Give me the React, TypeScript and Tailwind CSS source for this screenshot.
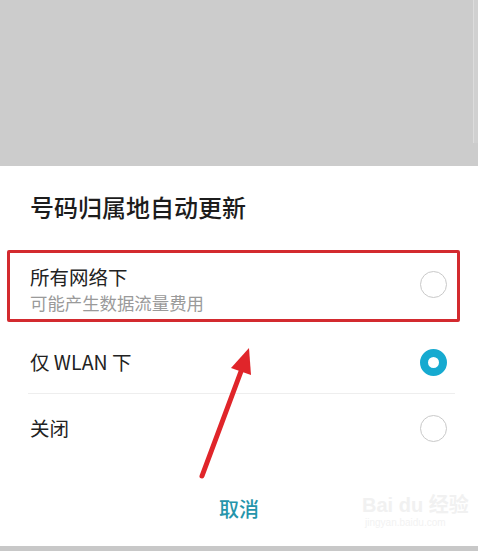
import React from 'react';

const font = { fontFamily: '"Noto Sans CJK SC", "Noto Sans", sans-serif' };

function Radio({ checked }: { checked?: boolean }) {
  return checked ? (
    <div className="w-[27px] h-[27px] rounded-full border-[8px] border-[#16aad0] bg-white" />
  ) : (
    <div className="w-[27px] h-[27px] rounded-full border-[1.5px] border-[#c9c9c9] bg-white" />
  );
}

export default function App() {
  return (
    <div
      className="relative w-[478px] h-[551px] overflow-hidden bg-white flex flex-col"
      style={font}
    >
      {/* dimmed page behind the sheet */}
      <div className="h-[166px] bg-[#cccccc] flex justify-end">
        <div className="w-[5px] h-[143px] border-l border-[#dcdcdc] bg-[#d0d0d0]" />
      </div>

      {/* title */}
      <div className="h-[84px] pt-[25px] pl-[30px]">
        <h2 className="text-[24px] leading-[32px] text-[#1c1c1c] font-medium">号码归属地自动更新</h2>
      </div>

      {/* option: all networks (highlighted) */}
      <div className="ml-[7px] mr-[18px] h-[72px] border-[3px] border-[#d32a2f] rounded-[2px] flex items-start justify-between pl-[20px] pr-[10px]">
        <div className="pt-[11px] flex flex-col">
          <span className="text-[19.5px] leading-[26px] text-[#222]">所有网络下</span>
          <span className="text-[17.4px] leading-[26px] text-[#9a9a9a]">可能产生数据流量费用</span>
        </div>
        <div className="self-center -mt-[3px]">
          <Radio />
        </div>
      </div>

      {/* option: WLAN only */}
      <div className="ml-[28px] mr-[23px] h-[72px] pt-[9px] flex items-center justify-between pl-[2px] pr-[8px] border-b border-[#eeeeee]">
        <span className="text-[19.5px] leading-[26px] text-[#222]">仅 WLAN 下</span>
        <Radio checked />
      </div>

      {/* option: off */}
      <div className="ml-[28px] mr-[23px] h-[68px] flex items-center justify-between pl-[2px] pr-[8px]">
        <span className="text-[19.5px] leading-[26px] text-[#222]">关闭</span>
        <Radio />
      </div>

      {/* cancel */}
      <div className="h-[84px] pt-[10px] flex items-center justify-center">
        <span className="text-[20px] leading-[28px] font-medium text-[#2595ab]">取消</span>
      </div>

      <div className="h-[5px] bg-[#c8c8c8]" />

      {/* annotation arrow */}
      <svg className="absolute left-0 top-0 pointer-events-none" width="478" height="551">
        <line x1="202" y1="476" x2="243" y2="366" stroke="#e0252a" strokeWidth="5" strokeLinecap="round" />
        <polygon points="249,348 231,368 251,375" fill="#e0252a" />
      </svg>

      {/* watermark */}
      <div className="absolute left-[362px] top-[494px] flex flex-col items-start pointer-events-none">
        <span className="text-[20px] leading-[22px] font-bold text-[#f1f1f1]" style={{ fontFamily: '"Liberation Sans", "Noto Sans CJK SC", sans-serif' }}>
          Bai du 经验
        </span>
        <span className="text-[10px] leading-[14px] text-[#f2f2f2] ml-[3px]" style={{ fontFamily: '"Liberation Sans", sans-serif' }}>
          jingyan.baidu.com
        </span>
      </div>
    </div>
  );
}
